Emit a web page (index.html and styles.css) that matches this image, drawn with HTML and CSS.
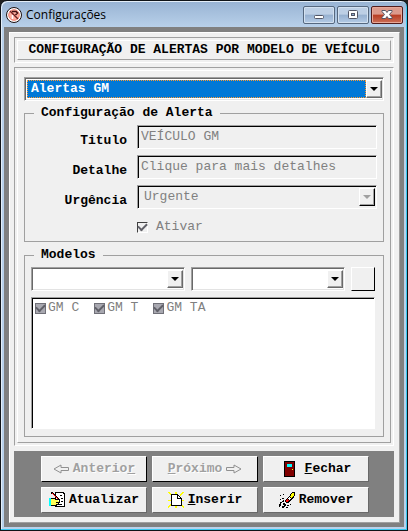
FILE: index.html
```html
<!DOCTYPE html>
<html lang="pt-BR">
<head>
<meta charset="utf-8">
<title>Configurações</title>
<link rel="stylesheet" href="styles.css">
</head>
<body>
<div class="window">
  <header class="titlebar">
    <svg class="app-icon" viewBox="0 0 16 16" aria-hidden="true">
      <circle cx="8" cy="8" r="7.5" fill="#fff" stroke="#1c1010"/>
      <circle cx="8" cy="8" r="5.3" fill="#ffb0a0" stroke="#f08070" stroke-width="1"/>
      <path d="M6 4.500h4l1.500 1.500-2 2" fill="none" stroke="#401010" stroke-width="1.500"/>
      <path d="M4 4l8 8" stroke="#702020" stroke-width="1.500"/>
      <path d="M6.500 8v4" stroke="#fff" stroke-width="1.500"/>
    </svg>
    <h1 class="caption">Configurações</h1>
    <div class="window-buttons">
      <button class="window-button" type="button" aria-label="Minimizar">
        <svg viewBox="0 0 12 12"><rect x="1.5" y="6.5" width="9" height="3" rx="1" fill="#fff" stroke="#535666"/></svg>
      </button>
      <button class="window-button" type="button" aria-label="Maximizar">
        <svg viewBox="0 0 12 12"><rect x="1.5" y="1.5" width="9" height="8" rx="1" fill="#fff" stroke="#535666"/><rect x="4.5" y="4.5" width="3" height="2" fill="#8fadd0" stroke="#535666"/></svg>
      </button>
      <button class="window-button close" type="button" aria-label="Fechar janela">
        <svg viewBox="0 0 12 12"><path d="M1 1.500h3.500L6 3.500l1.500-2H11v1L8.500 5.500l2.500 3v1H7.500L6 7.500l-1.500 2H1v-1l2.500-3L1 2.500z" fill="#fff" stroke="#535666"/></svg>
      </button>
    </div>
  </header>

  <main class="client">
    <div class="panel">
      <div class="frame">
        <h2 class="frame-inner heading">CONFIGURAÇÃO DE ALERTAS POR MODELO DE VEÍCULO</h2>
      </div>

      <div class="frame">
        <div class="frame-inner body">
          <div class="combo selected">
            <select aria-label="Alerta"><option>Alertas GM</option></select>
            <span class="drop"></span>
          </div>

          <fieldset class="group">
            <legend>Configuração de Alerta</legend>
            <div class="form">
              <label class="label" for="titulo">Titulo</label>
              <input class="field" id="titulo" type="text" value="VEÍCULO GM" disabled>
              <label class="label" for="detalhe">Detalhe</label>
              <input class="field" id="detalhe" type="text" value="Clique para mais detalhes" disabled>
              <label class="label" for="urgencia">Urgência</label>
              <div class="combo sunken">
                <select id="urgencia" disabled><option>Urgente</option></select>
                <span class="drop"></span>
              </div>
              <label class="check active"><input type="checkbox" checked disabled>Ativar</label>
            </div>
          </fieldset>

          <fieldset class="group models">
            <legend>Modelos</legend>
            <div class="filters">
              <div class="combo"><select aria-label="Marca"><option></option></select><span class="drop"></span></div>
              <div class="combo"><select aria-label="Modelo"><option></option></select><span class="drop"></span></div>
              <button class="button square" type="button" aria-label="Adicionar"></button>
            </div>
            <div class="list">
              <label class="check"><input type="checkbox" checked disabled>GM C</label>
              <label class="check"><input type="checkbox" checked disabled>GM T</label>
              <label class="check"><input type="checkbox" checked disabled>GM TA</label>
            </div>
          </fieldset>
        </div>
      </div>

      <div class="actions">
        <button class="button" type="button" disabled>
          <svg class="arrow" viewBox="0 0 16 10" aria-hidden="true"><path d="M1 5l7-4v2.500h7.500v3H8V9z" fill="#f0f0f0" stroke="#909090"/></svg>
          <span>Anterio<u>r</u></span>
        </button>
        <button class="button" type="button" disabled>
          <span><u>P</u>róximo</span>
          <svg class="arrow" viewBox="0 0 16 10" aria-hidden="true"><path d="M15 5L8 1v2.500H.5v3H8V9z" fill="#f0f0f0" stroke="#909090"/></svg>
        </button>
        <button class="button" type="button">
          <svg class="icon door" viewBox="0 0 16 16" aria-hidden="true">
            <path d="M3 0h11v16H3z" fill="#000"/><path d="M4 1h9v14H4z" fill="#800000"/><path d="M6 3h5v3H6z" fill="#0ff"/><path d="M11 8h1v1h-1z" fill="#ff0"/>
          </svg>
          <span><u>F</u>echar</span>
        </button>
        <button class="button" type="button">
          <svg class="icon" viewBox="0 0 16 16" aria-hidden="true">
            <path d="M6 0h9v1h1v14H6z" fill="#000"/><path d="M7 1h7v1h1v12H7z" fill="#fff"/>
            <path d="M11 3h2v1h-2zM12 6h2v1h-2zM12 9h2v1h-2zM9 12h4v1H9z" fill="#000"/>
            <path d="M0 6h2v8H0z" fill="#0ff"/>
            <path d="M2 6h4v1h3v2h2v2h-1v2H8v1H2z" fill="#000"/><path d="M2 7h4v1h3v1h1v1H9v2H7v1H2z" fill="#ff5"/>
            <path d="M7 10h2v1H7z" fill="#000"/>
            <path d="M2 0h2v1h1v1h1v1h1v1h1v1h1v1h1v1h1v2h-1V8H9V7H8V6H7V5H6V4H5V3H4V2H2z" fill="#000"/>
            <path d="M3 1h1v1h1v1h1v1h1v1h1v1h1v1H8V6H7V5H6V4H5V3H4V2H3z" fill="#f00"/>
          </svg>
          <span>Atualizar</span>
        </button>
        <button class="button" type="button">
          <svg class="icon" viewBox="0 0 16 16" aria-hidden="true">
            <path d="M0 0h2v1h1v1h1v2H3V3H2V2H1V1H0zM7 0h2v2H7zM14 0h2v1h-1v1h-1v1h-1v1h-1V2h1V1h1zM0 8h3v1H0zM14 8h2v1h-2zM0 16v-2h1v-1h1v-1h2v1H3v1H2v1H1v1zM12 12h2v1h1v1h1v2h-1v-1h-1v-1h-1v-1h-1zM7 14h2v2H7z" fill="#ff0"/>
            <path d="M3 2h7v1h1v1h1v1h1v1h1v8H3z" fill="#000"/><path d="M4 3h5v4h4v6H4zM10 4h1v1h1v1h-2z" fill="#fff"/>
          </svg>
          <span><u>I</u>nserir</span>
        </button>
        <button class="button" type="button">
          <svg class="icon" viewBox="0 0 16 16" aria-hidden="true">
            <path d="M13 0h3v4h-1v2h-1v1h-1v1h-1v1h-1v1h-1v1H7v-1H6V8h1V7h1V6h1V5h1V4h1V2h1V1h1z" fill="#000"/>
            <path d="M13 1h2v3h-1v1h-1v1h-1V5h-1V4h1V2h1z" fill="#ff0"/>
            <path d="M10 5h1v1h1v1h-1v1h-1V7H9V6h1z" fill="#fff"/>
            <path d="M8 7h1v1h1v1H9v1H7V8h1z" fill="#f00"/>
            <path d="M1 3h1v1H1zM4 2h1v1H4zM3 6h2v1H3zM1 7h1v1H1zM4 8h1v2H3V9h1zM1 10h2v1H2v3H1v1H0v-3h1zM4 11h2v1h1v2H6v-1H4zM3 14h2v-1h1v2H5v1H3zM8 13h2v1H8zM7 15h2v1H7zM11 12h1v1h-1z" fill="#000"/>
          </svg>
          <span>Remover</span>
        </button>
      </div>
    </div>
  </main>
</div>
</body>
</html>
```
FILE: styles.css
```css
* { box-sizing: border-box; }

body {
  margin: 0;
  background: #202020;
  color: #000;
  font: 13px/16px "Liberation Mono", "Courier New", monospace;
}

button, input, select {
  margin: 0;
  font: inherit;
  color: inherit;
}

.window {
  min-height: 100vh;
  padding: 0 3px 3px;
  border: 1px solid #101418;
  border-radius: 7px 7px 0 0;
  background: linear-gradient(#98b3d3, #b9d1ea 27px);
  box-shadow: inset -1px -1px #38c8f0, inset 1px 1px #e4eef8;
}

.titlebar {
  display: flex;
  align-items: center;
  height: 26px;
  padding: 2px 0 0 2px;
}

.app-icon { width: 16px; height: 16px; }

.caption {
  flex: 1;
  margin: 0 0 0 4px;
  font: 12px/16px "Open Sans", "Noto Sans", sans-serif;
}

.window-buttons { display: flex; gap: 2px; padding-right: 1px; }

.window-button {
  display: flex;
  align-items: center;
  justify-content: center;
  width: 32px;
  height: 18px;
  padding: 0;
  border: 1px solid #56687f;
  border-radius: 2px;
  background: linear-gradient(#bdcfe5 45%, #96b0d0 50%, #b4cbe5);
  box-shadow: inset 0 0 0 1px #d3e1f0;
}

.window-button.close {
  border-color: #521c1c;
  background: linear-gradient(#dc9a8c 45%, #b83c22 50%, #cc7058);
  box-shadow: inset 0 0 0 1px #e8a898;
}

.window-button svg { width: 12px; height: 12px; }

.client { padding: 5px 4px 4px 5px; background: #808080; }

.panel {
  display: flex;
  flex-direction: column;
  gap: 4px;
  padding: 4px 5px 5px 4px;
  border: 1px solid;
  border-color: #fff #a0a0a0 #a0a0a0 #fff;
  background: #f0f0f0;
}

.frame {
  padding: 2px;
  border: 1px solid;
  border-color: #a0a0a0 #fff #fff #a0a0a0;
}

.frame-inner {
  border: 1px solid;
  border-color: #fff #a0a0a0 #a0a0a0 #fff;
}

.heading {
  margin: 0;
  font-size: 13px;
  line-height: 18px;
  font-weight: bold;
  text-align: center;
  white-space: nowrap;
}

.body { padding: 6px 6px 5px; }

.combo {
  display: flex;
  min-width: 0;
  height: 24px;
  border: 1px solid;
  border-color: #a0a0a0 #fff #fff #a0a0a0;
  background: #fff;
  box-shadow: inset 1px 1px #696969, inset -1px -1px #e3e3e3;
  padding: 2px 1px 2px 2px;
}

.combo select {
  flex: 1;
  min-width: 0;
  padding: 0 4px;
  border: 0;
  border-radius: 0;
  outline: 0;
  background: none;
  appearance: none;
  opacity: 1;
}

.combo.selected select {
  padding: 0 3px;
  border: 1px dotted #ff9a30;
  background: #0078d7;
  color: #fff;
  font-weight: bold;
}

.drop {
  display: flex;
  align-items: center;
  justify-content: center;
  width: 16px;
  border: 1px solid;
  border-color: #fff #696969 #696969 #fff;
  background: #f0f0f0;
  box-shadow: inset -1px -1px #a0a0a0;
}

.drop::after {
  content: "";
  border: 4px solid transparent;
  border-top-color: #000;
  border-bottom: 0;
}

.sunken, .field {
  border: 1px solid;
  border-color: #a0a0a0 #fff #fff #a0a0a0;
  background: #f0f0f0;
  box-shadow: inset 1px 1px #000;
  color: #808080;
}

.sunken .drop { border-color: #fff #000 #000 #fff; }
.sunken .drop::after { border-top-color: #a0a0a0; }

.field {
  width: 100%;
  min-width: 0;
  height: 24px;
  padding: 0 3px 2px;
}

.group {
  min-width: 0;
  margin: 4px 0 0;
  padding: 4px 6px 6px;
  border: 1px solid #a0a0a0;
}

.group legend {
  height: 16px;
  margin-left: 3px;
  padding: 0 7px;
  font-weight: bold;
}

.form {
  display: grid;
  grid-template-columns: 96px 1fr;
  gap: 6px 10px;
}

.label {
  padding-top: 8px;
  text-align: right;
  font-weight: bold;
}

.check {
  display: flex;
  align-items: center;
  gap: 2px;
  color: #808080;
}

.check input {
  display: grid;
  place-items: center;
  width: 11px;
  height: 11px;
  border: 1px solid #707078;
  background: #a8a8b0;
  appearance: none;
}

.check input::after {
  content: "";
  width: 7px;
  height: 4px;
  border: solid #606068;
  border-width: 0 0 2px 2px;
  transform: translateY(-1px) rotate(-45deg);
}

.check.active { grid-column: 2; gap: 8px; margin: 4px 0 0; }

.check.active input {
  border-color: #404040 #fff #fff #404040;
  background: #f0f0f0;
}

.models { margin-top: 5px; padding: 4px 8px 7px 6px; }

.filters {
  display: grid;
  grid-template-columns: 1fr 1fr 24px;
  gap: 6px;
  margin-bottom: 6px;
}

.list {
  display: flex;
  align-items: flex-start;
  gap: 15px;
  height: 132px;
  padding: 2px 3px;
  border: 1px solid;
  border-color: #a0a0a0 #fff #fff #a0a0a0;
  background: #fff;
  box-shadow: inset 1px 1px #000;
}

.actions {
  display: grid;
  grid-template-columns: repeat(3, 1fr);
  gap: 5px;
  margin-top: 1px;
  padding: 5px 25px 4px 27px;
  background: #808080;
}

.button {
  display: flex;
  align-items: center;
  justify-content: center;
  gap: 4px;
  min-width: 0;
  height: 26px;
  padding: 0;
  border: 1px solid;
  border-color: #fff #696969 #696969 #fff;
  background: #f0f0f0;
  font-weight: bold;
  white-space: nowrap;
}

.button:disabled {
  border-color: #fff #000 #000 #fff;
  color: #a0a0a0;
  text-shadow: 1px 1px #fff;
}

.square { height: 24px; border-color: #fff #000 #000 #fff; }

.icon { width: 16px; height: 16px; shape-rendering: crispEdges; }
.door { margin-right: 4px; }
.arrow { width: 16px; height: 10px; }
```
